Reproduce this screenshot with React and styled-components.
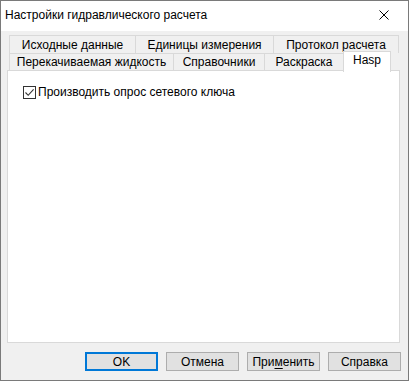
import React from 'react';
import styled, { createGlobalStyle } from 'styled-components';

const Global = createGlobalStyle`
  html, body { margin: 0; padding: 0; background: #ffffff; }
  * { box-sizing: border-box; }
`;

const rows = [
  [
    { label: 'Исходные данные', width: 127 },
    { label: 'Единицы измерения', width: 139 },
    { label: 'Протокол расчета', width: 126 },
  ],
  [
    { label: 'Перекачиваемая жидкость', width: 165 },
    { label: 'Справочники', width: 92 },
    { label: 'Раскраска', width: 80 },
    { label: 'Hasp', width: 48, active: true },
  ],
];

const buttons = [
  { label: 'OK', primary: true },
  { label: 'Отмена' },
  { label: <>При<u>м</u>енить</> },
  { label: 'Справка' },
];

function App() {
  return (
    <>
      <Global />
      <Window>
        <TitleBar>
          <Title>Настройки гидравлического расчета</Title>
          <CloseIcon width="10" height="10" viewBox="0 0 10 10">
            <path d="M0.5 0.5 L9.5 9.5 M9.5 0.5 L0.5 9.5" stroke="#000" strokeWidth="1" />
          </CloseIcon>
        </TitleBar>
        <Body>
          <TabStrip>
            {rows.map((row, i) => (
              <TabRow key={i}>
                {row.map((tab) => (
                  <Tab key={tab.label} $active={tab.active} style={{ width: tab.width }}>
                    {tab.label}
                  </Tab>
                ))}
              </TabRow>
            ))}
          </TabStrip>
          <Panel>
            <CheckRow>
              <CheckBox>
                <svg width="11" height="11" viewBox="0 0 11 11">
                  <path d="M1.5 5.5 L4.2 8.3 L9.6 2.4" fill="none" stroke="#333" strokeWidth="1.1" />
                </svg>
              </CheckBox>
              <CheckLabel>Производить опрос сетевого ключа</CheckLabel>
            </CheckRow>
          </Panel>
          <ButtonBar>
            {buttons.map((b, i) => (
              <Button key={i} $primary={b.primary}>{b.label}</Button>
            ))}
          </ButtonBar>
        </Body>
      </Window>
    </>
  );
}

const Window = styled.div`
  width: 409px;
  height: 381px;
  border: 1px solid #7a7a7a;
  display: flex;
  flex-direction: column;
  font-family: "Liberation Sans", Arial, sans-serif;
  font-size: 12px;
  color: #000;
`;

const TitleBar = styled.div`
  height: 30px;
  background: #ffffff;
  display: flex;
  align-items: center;
  justify-content: space-between;
  padding: 0 19px 0 4px;
`;

const Title = styled.span`
  font-family: "Liberation Sans", Arial, sans-serif;
  font-size: 12px;
  margin-top: -2px;
`;

const CloseIcon = styled.svg`
  display: block;
  margin-top: -2px;
`;

const Body = styled.div`
  flex: 1;
  background: #f0f0f0;
  padding: 4px 8px 0 6px;
  display: flex;
  flex-direction: column;
`;

const TabStrip = styled.div`
  padding-left: 2px;
  display: flex;
  flex-direction: column;
`;

const TabRow = styled.div`
  display: flex;
  height: 18px;
  & + & {
    height: 17px;
  }
`;

const Tab = styled.div`
  height: ${(p) => (p.$active ? '21px' : '100%')};
  margin-top: ${(p) => (p.$active ? '-2px' : '0')};
  margin-left: -1px;
  &:first-child { margin-left: 0; }
  border: 1px solid #d9d9d9;
  border-bottom: none;
  background: ${(p) => (p.$active ? '#ffffff' : '#f0f0f0')};
  position: relative;
  z-index: ${(p) => (p.$active ? 2 : 0)};
  display: flex;
  justify-content: center;
  align-items: ${(p) => (p.$active ? 'flex-start' : 'center')};
  padding-top: ${(p) => (p.$active ? '1px' : '0')};
  font-size: 12px;
  white-space: nowrap;
`;

const Panel = styled.div`
  height: 273px;
  background: #ffffff;
  border: 1px solid #d9d9d9;
  padding: 14px 15px;
  position: relative;
  z-index: 1;
`;

const CheckRow = styled.label`
  display: flex;
  align-items: center;
  gap: 2px;
`;

const CheckBox = styled.span`
  width: 13px;
  height: 13px;
  border: 1px solid #333333;
  background: #ffffff;
  display: flex;
  align-items: center;
  justify-content: center;
`;

const CheckLabel = styled.span`
  font-size: 12px;
`;

const ButtonBar = styled.div`
  display: flex;
  justify-content: flex-end;
  gap: 8px;
  margin-top: 9px;
  margin-right: -1px;
`;

const Button = styled.div`
  width: 73px;
  height: 19px;
  background: #e1e1e1;
  border: ${(p) => (p.$primary ? '2px solid #0078d7' : '1px solid #adadad')};
  display: flex;
  align-items: center;
  justify-content: center;
  font-size: 12px;
  u { text-decoration: underline; text-underline-offset: 2px; }
`;

export default App;
